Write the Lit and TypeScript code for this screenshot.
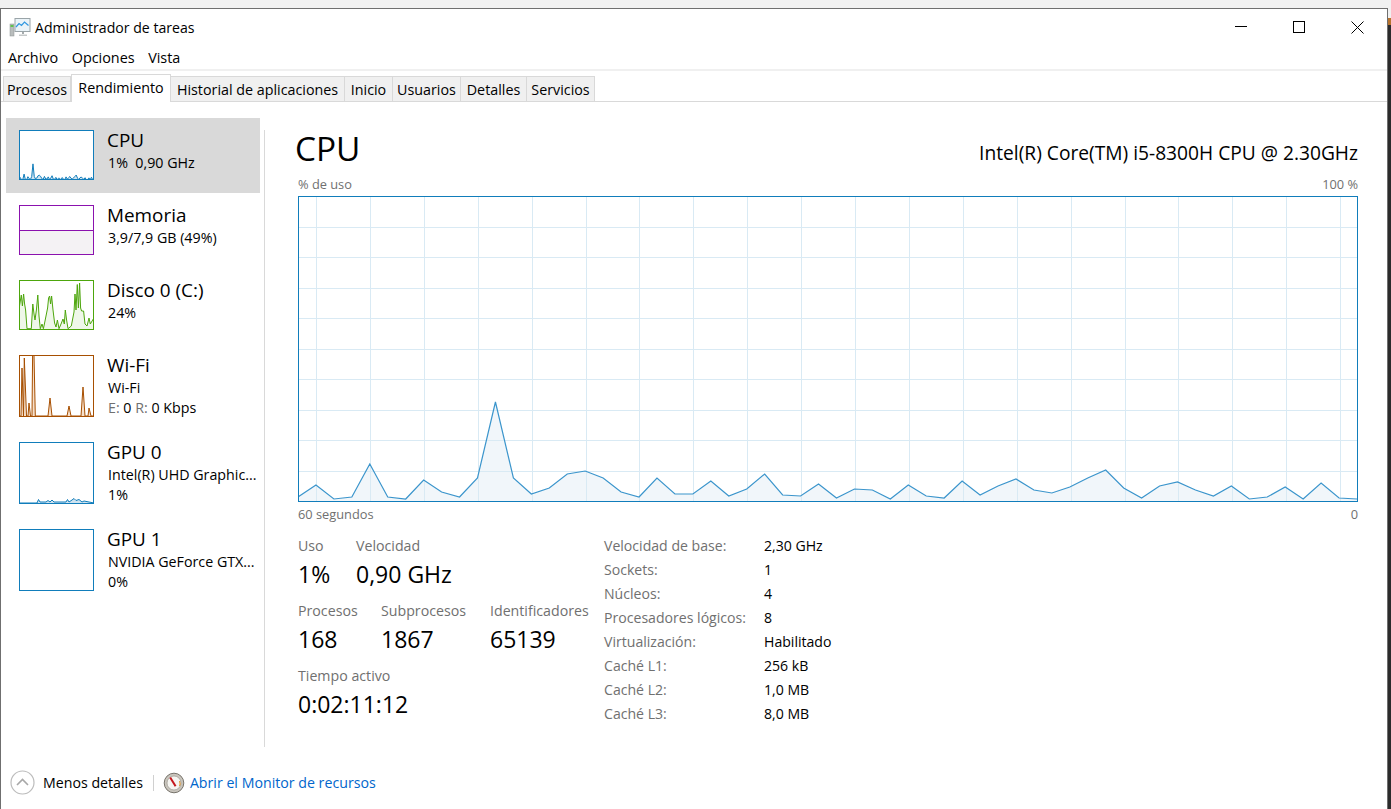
import { LitElement, css, html, svg } from "lit";
import { customElement } from "lit/decorators.js";

type Pt = [number, number];

// y pixel of each sample in the big chart, as read from the screen (top of chart = 196)
const CPU_Y = [
	497, 485, 499, 497, 464, 497, 499, 480, 492, 497, 478, 402, 478, 494, 488, 474, 471, 478, 492, 497,
	478, 494, 494, 481, 496, 489, 474, 495, 496, 484, 498, 489, 490, 499, 485, 496, 498, 481, 495, 486,
	479, 490, 493, 487, 478, 470, 488, 498, 486, 482, 490, 496, 486, 499, 497, 487, 499, 483, 498, 499,
];
const CPU_VALUES = CPU_Y.map((y) => (500 - y) / 304);

const DISK: Pt[] = [
	[0, 29], [1.3, 21], [2.3, 15], [3.4, 26], [4.6, 14], [5.6, 24], [6.6, 30], [8, 48.7], [12.3, 48.7], [13.8, 24],
	[15, 34], [16, 40], [17.4, 30], [18.8, 15], [20, 36], [21.3, 48.7], [23, 44], [24.4, 48.7], [26, 41], [28.6, 28],
	[29.6, 18], [30.6, 16], [31.6, 24], [32.6, 16], [34, 30], [35.6, 43], [37, 47], [38.4, 40], [40, 48.7], [42, 44],
	[44, 39], [45.3, 44], [46.3, 30], [47.6, 40], [49, 48.7], [52.3, 46], [55, 32], [56, 14], [57, 30], [58.3, 4.5],
	[59.4, 28], [60.6, 3], [61.6, 28], [62.6, 31], [64.6, 31], [66, 44], [68, 46], [70, 38], [71.3, 44], [74.3, 39],
];
const WIFI: Pt[] = [
	[0, 61], [2, 61], [3, 13], [4.5, 61], [5.3, 3], [7.5, 61], [9, 61], [10, 48], [11.5, 61], [13, 61],
	[13.6, 0], [15, 0], [16.3, 61], [29, 61], [31, 43], [33, 61], [48, 61], [50, 51], [52, 61], [62, 61],
	[64, 32], [66, 61], [69, 61], [70, 53], [72, 61], [75, 61],
];
const GPU0: Pt[] = [
	[0, 61], [18, 61], [19.5, 57.5], [21, 60], [27, 60], [29, 58.5], [31, 60], [33, 58], [35, 60], [47, 60],
	[48.5, 57.5], [50, 60], [53, 58], [55, 56.5], [57, 58.5], [60, 57.5], [63, 60], [65, 59], [75, 61],
];

function linePoints(pts: Pt[]) {
	return pts.map(([x, y]) => `${x},${y}`).join(" ");
}

function series(values: number[], w: number, h: number): Pt[] {
	return values.map((v, i) => [(i * w) / (values.length - 1), h - v * h]);
}

function areaPoints(pts: Pt[], bottom: number) {
	return `0,${bottom} ${linePoints(pts)} ${pts[pts.length - 1][0]},${bottom}`;
}

@customElement("app-root")
export class AppRoot extends LitElement {
	static override styles = css`
		:host {
			display: block;
			height: 809px;
			background: #f1f1f1;
			font-family: "Open Sans", "Noto Sans", sans-serif;
			color: #000;
			overflow: hidden;
		}

		.desktop {
			display: flex;
			padding-top: 8px;
			height: 809px;
			box-sizing: border-box;
		}

		.window {
			width: 1388px;
			height: 801px;
			box-sizing: border-box;
			background: #fff;
			border: 1px solid #6f6f6f;
			border-bottom: none;
			display: flex;
			flex-direction: column;
		}

		.edge {
			flex: 1;
			background: linear-gradient(#f1f1f1 0 10px, #b8742e 10px 17px, #2b2b2b 17px);
		}

		.titlebar {
			height: 36px;
			display: flex;
			align-items: center;
			padding-left: 8px;
			flex: none;
		}

		.title {
			margin-left: 4px;
			font-size: 14.1px;
			flex: 1;
		}

		.winbtn {
			width: 58.5px;
			height: 36px;
			display: flex;
			align-items: center;
			justify-content: center;
		}

		.menu {
			height: 24px;
			display: flex;
			align-items: center;
			padding-left: 7px;
			gap: 13.5px;
			font-size: 14.4px;
			border-bottom: 2px solid #f0f0f0;
			flex: none;
		}

		.tabs {
			height: 31px;
			display: flex;
			align-items: flex-end;
			padding-left: 2px;
			border-bottom: 1px solid #d9d9d9;
			box-sizing: border-box;
			flex: none;
		}

		.tab {
			height: 25px;
			box-sizing: border-box;
			background: #f0f0f0;
			border: 1px solid #d9d9d9;
			border-bottom: none;
			border-left-width: 0;
			font-size: 14.3px;
			line-height: 25px;
			text-align: center;
			white-space: nowrap;
		}

		.tab:first-child {
			border-left-width: 1px;
		}

		.tab.active {
			height: 28px;
			background: #fff;
			line-height: 26px;
			margin-bottom: -1px;
			border-left-width: 1px;
		}

		.w1 { width: 68px; }
		.w2 { width: 100px; }
		.w3 { width: 174px; }
		.w4 { width: 48px; }
		.w5 { width: 68px; }
		.w6 { width: 66px; }
		.w7 { width: 68px; }

		.body {
			height: 645px;
			display: flex;
			flex: none;
		}

		.side {
			width: 263px;
			padding: 16px 0 0 5px;
			box-sizing: border-box;
			flex: none;
		}

		.divider {
			width: 1px;
			margin-top: 28px;
			background: #d9d9d9;
			flex: none;
		}

		.item {
			width: 254px;
			height: 87px;
			box-sizing: border-box;
			padding: 12px 0 0 13px;
			display: flex;
			gap: 13px;
		}

		.item.short {
			height: 75px;
		}

		.item.selected {
			background: #d9d9d9;
		}

		.spark {
			display: block;
			flex: none;
		}

		.name {
			font-size: 18.9px;
			line-height: 21px;
		}

		.sub {
			font-size: 14.25px;
			line-height: 20px;
			white-space: nowrap;
			margin-left: 1px;
		}

		.sub.first {
			margin-top: 2px;
		}

		.sub .dim {
			color: #707070;
		}

		.panel {
			flex: 1;
			padding: 21px 29px 0 33px;
			box-sizing: border-box;
			min-width: 0;
		}

		.head {
			display: flex;
			justify-content: space-between;
			align-items: flex-end;
			height: 50px;
		}

		.heading {
			font-size: 33.4px;
			line-height: 50px;
			margin-left: -3px;
		}

		.model {
			font-size: 19.2px;
			line-height: 24px;
			margin-bottom: 8px;
		}

		.axis {
			display: flex;
			justify-content: space-between;
			font-size: 12.8px;
			line-height: 16px;
			color: #707070;
		}

		.axis.top {
			margin: 3px 0 4px;
		}

		.axis.bottom {
			margin-top: 4px;
		}

		.chart {
			display: block;
		}

		.stats {
			display: flex;
			margin-top: 14px;
		}

		.left {
			width: 306px;
			flex: none;
		}

		.row {
			display: grid;
			margin-bottom: 11px;
		}

		.row.a { grid-template-columns: 58px auto; }
		.row.b { grid-template-columns: 83px 109px auto; }

		.label {
			font-size: 14.2px;
			line-height: 20px;
			color: #707070;
			white-space: nowrap;
		}

		.value {
			font-size: 23px;
			line-height: 32px;
			margin-top: 2px;
			white-space: nowrap;
		}

		.specs {
			display: grid;
			grid-template-columns: 160px auto;
			grid-auto-rows: 24px;
			align-items: center;
			justify-content: start;
			margin-top: -3px;
			font-size: 14.1px;
		}

		.specs .k {
			color: #707070;
		}

		.footer {
			flex: 1;
			display: flex;
			align-items: center;
			padding: 9px 0 0 9px;
			font-size: 14.2px;
		}

		.less {
			margin-left: 8px;
		}

		.sep {
			width: 1px;
			height: 16px;
			background: #d0d0d0;
			margin: 0 9px 0 10px;
		}

		.link {
			margin-left: 5px;
			color: #0066cc;
		}
	`;

	private spark(w: number, h: number, color: string, fill: string, line: Pt[]) {
		return html`<svg class="spark" width=${w} height=${h} viewBox="0 0 ${w} ${h}">
			<rect x="0" y="0" width=${w} height=${h} fill="#fff"></rect>
			${line.length
				? svg`<polygon points=${areaPoints(line, h)} fill=${fill}></polygon>
					<polyline points=${linePoints(line)} fill="none" stroke=${color} stroke-width="1"></polyline>`
				: ""}
			<rect x="0.5" y="0.5" width=${w - 1} height=${h - 1} fill="none" stroke=${color}></rect>
		</svg>`;
	}

	private memorySpark() {
		const c = "#8b12ae";
		return html`<svg class="spark" width="75" height="50" viewBox="0 0 75 50">
			<rect x="0" y="25" width="75" height="25" fill="#f4f2f4"></rect>
			<path d="M0 25.5H75" stroke=${c}></path>
			<rect x="0.5" y="0.5" width="74" height="49" fill="none" stroke=${c}></rect>
		</svg>`;
	}

	private bigChart() {
		const w = 1060;
		const h = 306;
		const c = "#117dbb";
		const grid = "#d9eaf4";
		const vert = Array.from({ length: 20 }, (_, i) => Math.round(18 + i * 53.9) + 0.5);
		const horiz = Array.from({ length: 9 }, (_, i) => Math.round(30.5 * (i + 1)) + 0.5);
		const line = CPU_Y.map((y, i): Pt => [(i * (w - 1)) / 59, y - 196]);
		return html`<svg class="chart" width=${w} height=${h} viewBox="0 0 ${w} ${h}">
			<polygon points=${areaPoints(line, h)} fill="#f1f6fa"></polygon>
			${vert.map((x) => svg`<path d="M${x} 0V${h}" stroke=${grid} shape-rendering="crispEdges"></path>`)}
			${horiz.map((y) => svg`<path d="M0 ${y}H${w}" stroke=${grid} shape-rendering="crispEdges"></path>`)}
			<polyline points=${linePoints(line)} fill="none" stroke="#3b95cc" stroke-width="1.2"></polyline>
			<rect x="0.5" y="0.5" width=${w - 1} height=${h - 1} fill="none" stroke=${c}></rect>
		</svg>`;
	}

	private appIcon() {
		return html`<svg width="22" height="20" viewBox="0 0 22 20">
			<rect x="1" y="7" width="4" height="12" fill="#b9bdbd" stroke="#8d9292" stroke-width="0.5"></rect>
			<rect x="1.5" y="8" width="3" height="2" fill="#5fc24c"></rect>
			<rect x="6" y="1.5" width="15" height="13" fill="#eaf3f8" stroke="#9aa4a8"></rect>
			<path d="M7 10L10 6.5L12.5 8.5L15.5 5L19.5 8.5" fill="none" stroke="#2f97e0" stroke-width="1.2"></path>
			<path d="M13 15h2v2h-2z" fill="#a5abad"></path>
			<path d="M10 17.5h8v1.5h-8z" fill="#c4c8c9"></path>
		</svg>`;
	}

	private gaugeIcon() {
		return html`<svg width="22" height="22" viewBox="0 0 22 22">
			<circle cx="11" cy="11" r="9.8" fill="#c9c5bd" stroke="#77736b" stroke-width="1"></circle>
			<circle cx="11" cy="11" r="7" fill="#f6f5f1" stroke="#8f8b84" stroke-width="0.6"></circle>
			<path d="M16.5 9A6 6 0 0 1 16.5 14" fill="none" stroke="#e09a3a" stroke-width="1.2"></path>
			<path d="M7.2 5.5L12.6 14.2" stroke="#c5161d" stroke-width="2"></path>
		</svg>`;
	}

	override render() {
		const cpuMini = series(CPU_VALUES, 75, 50);
		return html`<div class="desktop">
			<div class="window">
				<div class="titlebar">
					${this.appIcon()}
					<div class="title">Administrador de tareas</div>
					<div class="winbtn">
						<svg width="12" height="12" viewBox="0 0 12 12"><path d="M0 5.5H12" stroke="#000"></path></svg>
					</div>
					<div class="winbtn">
						<svg width="12" height="12" viewBox="0 0 12 12"><rect x="0.5" y="0.5" width="11" height="11" fill="none" stroke="#000"></rect></svg>
					</div>
					<div class="winbtn">
						<svg width="13" height="13" viewBox="0 0 13 13"><path d="M0.5 0.5L12.5 12.5M12.5 0.5L0.5 12.5" stroke="#000"></path></svg>
					</div>
				</div>
				<div class="menu"><span>Archivo</span><span>Opciones</span><span>Vista</span></div>
				<div class="tabs">
					<div class="tab w1">Procesos</div>
					<div class="tab w2 active">Rendimiento</div>
					<div class="tab w3">Historial de aplicaciones</div>
					<div class="tab w4">Inicio</div>
					<div class="tab w5">Usuarios</div>
					<div class="tab w6">Detalles</div>
					<div class="tab w7">Servicios</div>
				</div>
				<div class="body">
					<div class="side">
						<div class="item short selected">
							${this.spark(75, 50, "#117dbb", "#cfe3f0", cpuMini)}
							<div>
								<div class="name">CPU</div>
								<div class="sub first">1%&nbsp; 0,90 GHz</div>
							</div>
						</div>
						<div class="item short">
							${this.memorySpark()}
							<div>
								<div class="name">Memoria</div>
								<div class="sub first">3,9/7,9 GB (49%)</div>
							</div>
						</div>
						<div class="item short">
							${this.spark(75, 50, "#4da60c", "#eff7e9", DISK)}
							<div>
								<div class="name">Disco 0 (C:)</div>
								<div class="sub first">24%</div>
							</div>
						</div>
						<div class="item">
							${this.spark(75, 62, "#a74f01", "#f6dfca", WIFI)}
							<div>
								<div class="name">Wi-Fi</div>
								<div class="sub first">Wi-Fi</div>
								<div class="sub"><span class="dim">E:</span> 0 <span class="dim">R:</span> 0 Kbps</div>
							</div>
						</div>
						<div class="item">
							${this.spark(75, 62, "#117dbb", "#cfe3f0", GPU0)}
							<div>
								<div class="name">GPU 0</div>
								<div class="sub first">Intel(R) UHD Graphic...</div>
								<div class="sub">1%</div>
							</div>
						</div>
						<div class="item">
							${this.spark(75, 62, "#117dbb", "#cfe3f0", [])}
							<div>
								<div class="name">GPU 1</div>
								<div class="sub first">NVIDIA GeForce GTX...</div>
								<div class="sub">0%</div>
							</div>
						</div>
					</div>
					<div class="divider"></div>
					<div class="panel">
						<div class="head">
							<div class="heading">CPU</div>
							<div class="model">Intel(R) Core(TM) i5-8300H CPU @ 2.30GHz</div>
						</div>
						<div class="axis top"><span>% de uso</span><span>100 %</span></div>
						${this.bigChart()}
						<div class="axis bottom"><span>60 segundos</span><span>0</span></div>
						<div class="stats">
							<div class="left">
								<div class="row a">
									<div><div class="label">Uso</div><div class="value">1%</div></div>
									<div><div class="label">Velocidad</div><div class="value">0,90 GHz</div></div>
								</div>
								<div class="row b">
									<div><div class="label">Procesos</div><div class="value">168</div></div>
									<div><div class="label">Subprocesos</div><div class="value">1867</div></div>
									<div><div class="label">Identificadores</div><div class="value">65139</div></div>
								</div>
								<div><div class="label">Tiempo activo</div><div class="value">0:02:11:12</div></div>
							</div>
							<div class="specs">
								<span class="k">Velocidad de base:</span><span>2,30 GHz</span>
								<span class="k">Sockets:</span><span>1</span>
								<span class="k">Núcleos:</span><span>4</span>
								<span class="k">Procesadores lógicos:</span><span>8</span>
								<span class="k">Virtualización:</span><span>Habilitado</span>
								<span class="k">Caché L1:</span><span>256 kB</span>
								<span class="k">Caché L2:</span><span>1,0 MB</span>
								<span class="k">Caché L3:</span><span>8,0 MB</span>
							</div>
						</div>
					</div>
				</div>
				<div class="footer">
					<svg width="25" height="25" viewBox="0 0 25 25">
						<circle cx="12.5" cy="12.5" r="11.5" fill="#fff" stroke="#bcbcbc" stroke-width="1.2"></circle>
						<path d="M7 15L12.5 9.5L18 15" fill="none" stroke="#a8a8a8" stroke-width="1.6"></path>
					</svg>
					<span class="less">Menos detalles</span>
					<div class="sep"></div>
					${this.gaugeIcon()}
					<span class="link">Abrir el Monitor de recursos</span>
				</div>
			</div>
			<div class="edge"></div>
		</div>`;
	}
}

declare global {
	interface HTMLElementTagNameMap {
		"app-root": AppRoot;
	}
}
